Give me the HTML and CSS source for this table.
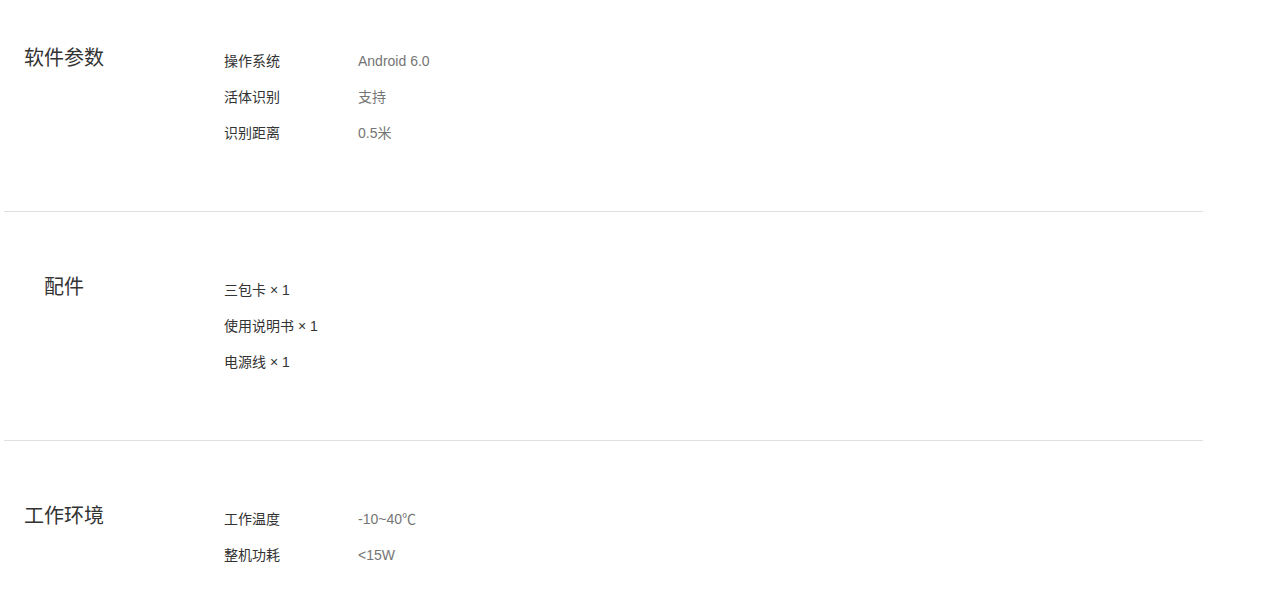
FILE: index.html
```html
<!DOCTYPE html>
<html lang="zh">
<head>
<meta charset="utf-8">
<link rel="stylesheet" href="styles.css">
</head>
<body>
<div class="specs">
  <section class="spec first">
    <h3 class="spec-title">软件参数</h3>
    <ul class="spec-list">
      <li class="row"><span class="label">操作系统</span><span class="value">Android 6.0</span></li>
      <li class="row"><span class="label">活体识别</span><span class="value">支持</span></li>
      <li class="row"><span class="label">识别距离</span><span class="value">0.5米</span></li>
    </ul>
  </section>
  <section class="spec">
    <h3 class="spec-title">配件</h3>
    <ul class="spec-list">
      <li class="row"><span class="label wide">三包卡 × 1</span></li>
      <li class="row"><span class="label wide">使用说明书 × 1</span></li>
      <li class="row"><span class="label wide">电源线 × 1</span></li>
    </ul>
  </section>
  <section class="spec">
    <h3 class="spec-title">工作环境</h3>
    <ul class="spec-list">
      <li class="row"><span class="label">工作温度</span><span class="value">-10~40℃</span></li>
      <li class="row"><span class="label">整机功耗</span><span class="value">&lt;15W</span></li>
    </ul>
  </section>
</div>
</body>
</html>
```
FILE: styles.css
```css
html, body {
  margin: 0;
  padding: 0;
  background: #fff;
}
body {
  font-family: "Liberation Sans", "Noto Sans CJK SC", Arial, sans-serif;
  color: #333;
}
.specs {
  width: 1199px;
  margin-left: 4px;
}
.spec {
  display: flex;
  border-top: 1px solid #e0e0e0;
  padding: 60px 0 60px 0;
}
.spec.first {
  border-top: none;
  padding-top: 43px;
}
.spec-title {
  width: 120px;
  margin: 0;
  padding-top: 1px;
  text-align: center;
  font-size: 20px;
  font-weight: normal;
  line-height: 28px;
  color: #333;
}
.spec-list {
  list-style: none;
  margin: 0 0 0 100px;
  padding: 0;
}
.row {
  display: flex;
  height: 36px;
  line-height: 36px;
  font-size: 14px;
}
.label {
  width: 134px;
  color: #333;
}
.label.wide {
  width: auto;
}
.value {
  color: #757575;
}
```
